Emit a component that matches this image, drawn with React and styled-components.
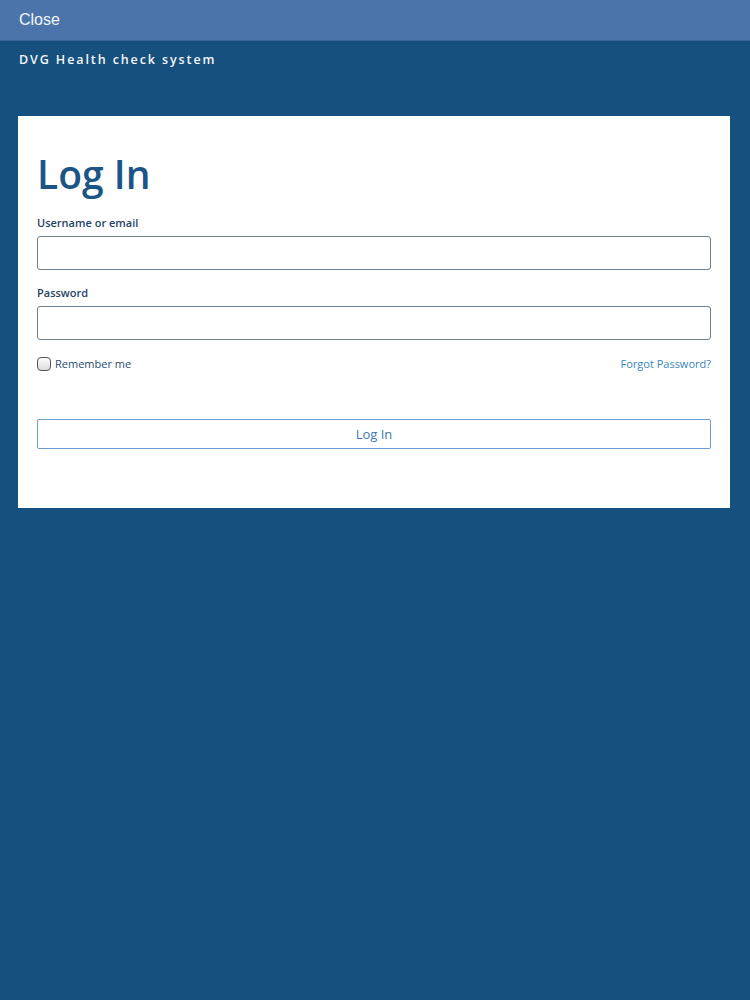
import React from 'react'
import styled, { createGlobalStyle } from 'styled-components';

const Global = createGlobalStyle`
  html, body {
    margin: 0;
    padding: 0;
    background: #16507e;
  }
  * { box-sizing: border-box; }
`;

const App = () => {
  return (
    <Page>
      <Global />
      <TopBar>Close</TopBar>
      <Brand>DVG Health check system</Brand>
      <Card>
        <Title>Log In</Title>
        <Label>Username or email</Label>
        <Input type="text" />
        <Label>Password</Label>
        <Input type="password" />
        <OptionsRow>
          <Remember>
            <Box />
            Remember me
          </Remember>
          <Forgot>Forgot Password?</Forgot>
        </OptionsRow>
        <Submit>Log In</Submit>
      </Card>
    </Page>
  )
};

const Page = styled.div`
  min-height: 1000px;
  background: #16507e;
  display: flex;
  flex-direction: column;
`;

const TopBar = styled.div`
  height: 41px;
  background: #4b75aa;
  color: #f2f5fa;
  font-family: "Liberation Sans", Arial, sans-serif;
  font-size: 16px;
  display: flex;
  align-items: center;
  padding-left: 19px;
  border-bottom: 1px solid #3d6896;
`;

const Brand = styled.div`
  color: #f4f7fb;
  font-family: "Open Sans", sans-serif;
  font-weight: 600;
  font-size: 12.5px;
  letter-spacing: 1.9px;
  padding: 10px 0 0 19px;
  height: 75px;
`;

const Card = styled.div`
  margin: 0 20px 0 18px;
  background: #ffffff;
  height: 392px;
  padding: 30px 19px 0 19px;
  display: flex;
  flex-direction: column;
`;

const Title = styled.h1`
  margin: 0 0 13px;
  font-family: "Open Sans", sans-serif;
  font-weight: 600;
  font-size: 39px;
  line-height: 56px;
  color: #1b5585;
`;

const Label = styled.div`
  font-family: "Open Sans", sans-serif;
  font-weight: 600;
  font-size: 11px;
  color: #1f4468;
  margin-bottom: 6px;
  line-height: 15px;
`;

const Input = styled.input`
  display: block;
  width: 100%;
  height: 34px;
  border: 1.5px solid #6e7f93;
  border-radius: 3px;
  background: #fff;
  margin: 0 0 15px;
  outline: none;
`;

const OptionsRow = styled.div`
  display: flex;
  justify-content: space-between;
  align-items: center;
  margin-top: 1px;
  font-family: "Open Sans", sans-serif;
  font-size: 11px;
`;

const Remember = styled.label`
  display: flex;
  align-items: center;
  gap: 4px;
  color: #2a4d70;
`;

const Box = styled.span`
  width: 14px;
  height: 14px;
  border: 1px solid #555;
  border-radius: 4px;
  background: linear-gradient(#fdfdfd, #dcdcdc);
  display: inline-block;
`;

const Forgot = styled.a`
  color: #3a86bf;
  text-decoration: none;
`;

const Submit = styled.button`
  margin-top: 48px;
  width: 100%;
  height: 30px;
  background: #fff;
  border: 1.5px solid #6a9fcf;
  border-radius: 2px;
  color: #3b7ab3;
  font-family: "Open Sans", sans-serif;
  font-size: 13px;
  cursor: pointer;
`;

export default App;
